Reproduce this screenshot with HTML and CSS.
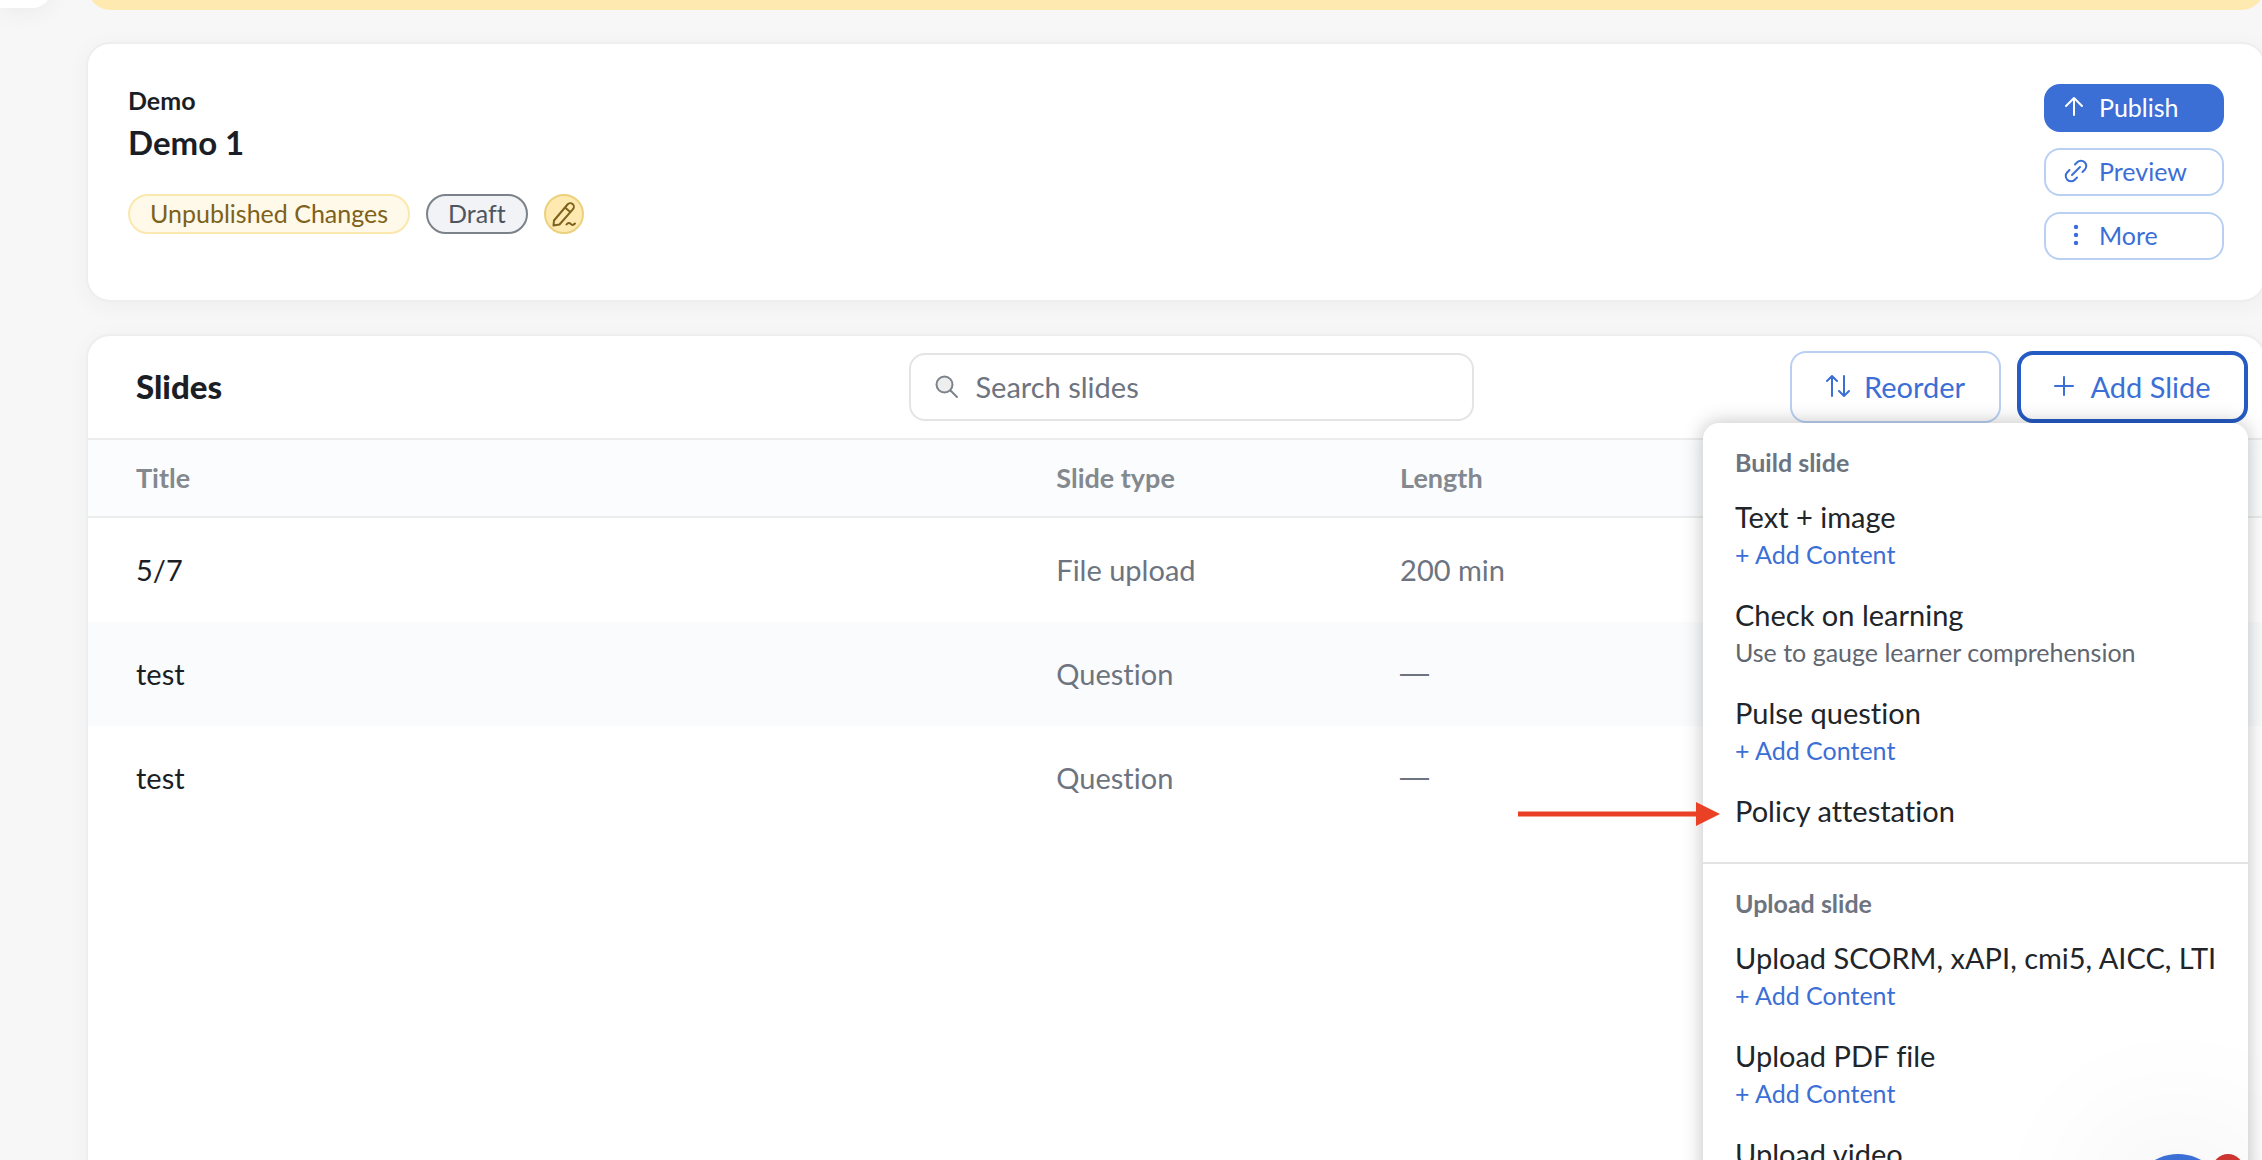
FILE: index.html
```html
<!DOCTYPE html>
<html lang="en">
<head>
<meta charset="utf-8">
<meta name="viewport" content="width=device-width, initial-scale=1">
<title>Demo 1</title>
<link rel="stylesheet" href="styles.css">
</head>
<body>
<div class="layout">
  <aside class="sidebar"></aside>
  <main class="main">
    <div class="banner"></div>

    <section class="card summary">
      <div class="summary-info">
        <p class="course">Demo</p>
        <h1 class="lesson">Demo 1</h1>
        <div class="badges">
          <span class="badge badge-warning">Unpublished Changes</span>
          <span class="badge badge-draft">Draft</span>
          <button class="edit" type="button" aria-label="Edit status">
            <svg width="26" height="26" viewBox="0 0 26 26" fill="none" stroke="currentColor" stroke-width="2" stroke-linecap="round" stroke-linejoin="round"><path d="M3 19.500 16.500 3.500a3.600 3.600 0 0 1 5.500 4.700L8.500 23.500 2.500 24.500ZM14 6.500l5.500 4.700M15.500 23.500c1.500-2 3-2 4.200-.6s2.600 1.400 4.300-.4"/></svg>
          </button>
        </div>
      </div>
      <div class="summary-actions">
        <button class="button primary" type="button">
          <svg width="24" height="24" viewBox="0 0 24 24" fill="none" stroke="currentColor" stroke-width="2" stroke-linecap="round" stroke-linejoin="round"><path d="M10 20V3M2 11l8-8 8 8"/></svg>
          Publish
        </button>
        <button class="button" type="button">
          <svg width="24" height="24" viewBox="0 0 24 24" fill="none" stroke="currentColor" stroke-width="2" stroke-linecap="round" stroke-linejoin="round"><path d="M8 16 16 8M11 5.500l2.200-2.200a5.300 5.300 0 0 1 7.500 7.500L18.500 13M13 18.500l-2.200 2.200a5.300 5.300 0 0 1-7.500-7.500L5.500 11"/></svg>
          Preview
        </button>
        <button class="button" type="button">
          <svg width="24" height="24" viewBox="0 0 24 24" fill="currentColor"><circle cx="12" cy="4" r="2.200"/><circle cx="12" cy="12" r="2.200"/><circle cx="12" cy="20" r="2.200"/></svg>
          More
        </button>
      </div>
    </section>

    <section class="card slides">
      <header class="toolbar">
        <h2 class="slides-title">Slides</h2>
        <div class="search">
          <svg width="24" height="24" viewBox="0 0 24 24" fill="none" stroke="currentColor" stroke-width="2" stroke-linecap="round"><circle cx="9.500" cy="9.500" r="8" fill="#eeeeee"/><path d="M15.500 15.500 22 22"/></svg>
          <input class="search-input" type="search" placeholder="Search slides" aria-label="Search slides">
        </div>
        <div class="toolbar-actions">
          <button class="button large reorder" type="button">
            <svg width="24" height="24" viewBox="0 0 24 24" fill="none" stroke="currentColor" stroke-width="2" stroke-linecap="round" stroke-linejoin="round"><path d="M6 22V2M1 7l5-5 5 5M18 2v20M13 17l5 5 5-5"/></svg>
            Reorder
          </button>
          <div class="dropdown">
            <button class="button large add" type="button" aria-expanded="true">
              <svg width="20" height="20" viewBox="0 0 20 20" fill="none" stroke="currentColor" stroke-width="2" stroke-linecap="round"><path d="M10 1v18M1 10h18"/></svg>
              Add Slide
            </button>
            <div class="menu">
              <section class="menu-section">
                <h3 class="menu-heading">Build slide</h3>
                <ul class="menu-list">
                  <li class="item"><button class="item-title" type="button">Text + image</button><a class="item-sub link" href="#">+ Add Content</a></li>
                  <li class="item"><button class="item-title" type="button">Check on learning</button><span class="item-sub">Use to gauge learner comprehension</span></li>
                  <li class="item"><button class="item-title" type="button">Pulse question</button><a class="item-sub link" href="#">+ Add Content</a></li>
                  <li class="item">
                    <button class="item-title" type="button">Policy attestation</button>
                    <svg class="pointer" width="202" height="24" viewBox="0 0 202 24" fill="#ea4025"><path d="M0 9.500h178V0l24 12-24 12v-9.500H0z"/></svg>
                  </li>
                </ul>
              </section>
              <section class="menu-section">
                <h3 class="menu-heading">Upload slide</h3>
                <ul class="menu-list">
                  <li class="item"><button class="item-title" type="button">Upload SCORM, xAPI, cmi5, AICC, LTI</button><a class="item-sub link" href="#">+ Add Content</a></li>
                  <li class="item"><button class="item-title" type="button">Upload PDF file</button><a class="item-sub link" href="#">+ Add Content</a></li>
                  <li class="item"><button class="item-title" type="button">Upload video</button></li>
                </ul>
              </section>
            </div>
          </div>
        </div>
      </header>
      <table class="table">
        <thead>
          <tr><th class="col-title">Title</th><th class="col-type">Slide type</th><th>Length</th></tr>
        </thead>
        <tbody>
          <tr><td>5/7</td><td>File upload</td><td>200 min</td></tr>
          <tr><td>test</td><td>Question</td><td class="empty">—</td></tr>
          <tr><td>test</td><td>Question</td><td class="empty">—</td></tr>
        </tbody>
      </table>
    </section>
  </main>
</div>
<button class="launcher" type="button" aria-label="Open chat"><span class="launcher-count"></span></button>
</body>
</html>
```
FILE: styles.css
```css
* {
  box-sizing: border-box;
}

body {
  margin: 0;
  height: 100vh;
  overflow: hidden;
  background: #f7f7f7;
  color: #1b1e25;
  font-family: Lato, "Liberation Sans", sans-serif;
  font-size: 29px;
  font-variant-ligatures: none;
}

h1, h2, h3, p, ul {
  margin: 0;
  padding: 0;
}

button, input {
  font: inherit;
  font-variant-ligatures: none;
}

svg {
  flex: none;
}

.layout {
  display: grid;
  grid-template-columns: 52px minmax(0, 1fr);
  gap: 34px;
  align-items: start;
}

.sidebar {
  height: 64px;
  margin-top: -56px;
  border-radius: 0 0 20px 0;
  background: #fff;
  box-shadow: 0 4px 24px rgba(0, 0, 0, 0.05);
}

.main {
  display: flex;
  flex-direction: column;
  gap: 32px;
  margin-right: -4px;
}

.banner {
  height: 64px;
  margin: -54px 2px 0;
  border-radius: 22px;
  background: #feeab1;
}

.card {
  border: 2px solid #eeeeee;
  border-radius: 24px;
  background: #fff;
  box-shadow: 0 4px 24px rgba(0, 0, 0, 0.04);
}

.summary {
  display: flex;
  justify-content: space-between;
  padding: 40px;
}

.course {
  font-size: 25px;
  font-weight: 700;
  line-height: 32px;
}

.lesson {
  margin-top: 2px;
  font-size: 33px;
  font-weight: 700;
  line-height: 48px;
}

.badges {
  display: flex;
  gap: 16px;
  margin-top: 28px;
}

.badge {
  height: 40px;
  padding: 0 20px;
  border: 2px solid;
  border-radius: 20px;
  font-size: 25px;
  line-height: 35px;
}

.badge-warning {
  border-color: #fbe8ae;
  background: #fef9e8;
  color: #7e611b;
}

.badge-draft {
  border-color: #7b828a;
  background: #f2f3f6;
  color: #4e555e;
}

.edit {
  display: grid;
  place-items: center;
  width: 40px;
  height: 40px;
  padding: 0;
  border: 2px solid #ecd17d;
  border-radius: 50%;
  background: #feeab1;
  color: #7e611b;
}

.summary-actions {
  display: flex;
  flex-direction: column;
  gap: 16px;
  width: 180px;
}

.button {
  display: flex;
  align-items: center;
  gap: 11px;
  height: 48px;
  padding: 0 18px 2px;
  border: 2px solid #b9d0f3;
  border-radius: 16px;
  background: #fff;
  color: #3b6fd6;
  font-size: 25px;
  white-space: nowrap;
}

.primary {
  border-color: #3b6fd6;
  background: #3b6fd6;
  color: #fff;
}

.slides {
  min-height: 100vh;
}

.toolbar {
  display: grid;
  grid-template-columns: 37.75% 25.95% minmax(0, 1fr);
  align-items: center;
  height: 104px;
  border-bottom: 2px solid #eceeee;
}

.slides-title {
  padding: 0 0 2px 48px;
  font-size: 33px;
  font-weight: 900;
}

.search {
  display: flex;
  align-items: center;
  gap: 16px;
  height: 68px;
  padding: 0 24px;
  border: 2px solid #e4e4e4;
  border-radius: 16px;
  color: #7b828a;
}

.search-input {
  flex: 1;
  min-width: 0;
  padding: 0 0 2px;
  border: 0;
  outline: 0;
  background: none;
  color: #6d7480;
}

.search-input::placeholder {
  color: #6d7480;
  opacity: 1;
}

.toolbar-actions {
  display: flex;
  justify-content: flex-end;
  gap: 16px;
  padding-right: 16px;
}

.large {
  justify-content: center;
  height: 72px;
  font-size: 29px;
}

.reorder {
  width: 211px;
  gap: 14px;
}

.add {
  width: 231px;
  gap: 16px;
  border: 4px solid #265bc4;
}

.dropdown {
  position: relative;
}

.menu {
  position: absolute;
  top: 100%;
  right: 0;
  width: 545px;
  border-radius: 16px;
  background: #fff;
  box-shadow: 0 0 20px rgba(0, 0, 0, 0.25);
}

.menu-section {
  padding-bottom: 18px;
}

.menu-section + .menu-section {
  border-top: 2px solid #e2e3e5;
}

.menu-heading {
  padding: 23px 32px 8px;
  color: #6d7480;
  font-size: 25px;
  font-weight: 700;
  line-height: 32px;
}

.menu-list {
  list-style: none;
}

.item {
  position: relative;
  padding: 11px 32px 13px;
  white-space: nowrap;
}

.item-title {
  display: block;
  padding: 0;
  border: 0;
  background: none;
  color: #212529;
  line-height: 40px;
}

.item-sub {
  display: block;
  color: #5f6670;
  font-size: 25px;
  line-height: 34px;
}

.link {
  color: #3b6fd6;
  text-decoration: none;
}

.pointer {
  position: absolute;
  top: 22px;
  left: -185px;
}

.table {
  width: 100%;
  border-spacing: 0;
  table-layout: fixed;
}

.table th,
.table td {
  padding: 0 0 2px;
  text-align: left;
}

.table th {
  height: 78px;
  border-bottom: 2px solid #eceeee;
  background: #fbfcfd;
  color: #83898f;
  font-size: 27px;
  font-weight: 700;
}

.table td {
  height: 104px;
  color: #6d7480;
}

.table tbody tr:nth-child(even) {
  background: #fafbfd;
}

.table th:first-child,
.table td:first-child {
  padding-left: 48px;
}

.table td:first-child {
  color: #1b1e25;
}

.table .empty {
  font-family: "Liberation Sans", sans-serif;
}

.col-title {
  width: 44.5%;
}

.col-type {
  width: 15.8%;
}

.launcher {
  position: fixed;
  right: 36px;
  bottom: -90px;
  width: 96px;
  height: 96px;
  padding: 0;
  border: 0;
  border-radius: 50%;
  background: #3b6fd6;
  box-shadow: 0 2px 12px rgba(0, 0, 0, 0.06), 0 4px 160px rgba(0, 0, 0, 0.16);
}

.launcher-count {
  position: absolute;
  top: 0;
  right: -18px;
  width: 32px;
  height: 32px;
  border-radius: 50%;
  background: #cc3530;
}
```
